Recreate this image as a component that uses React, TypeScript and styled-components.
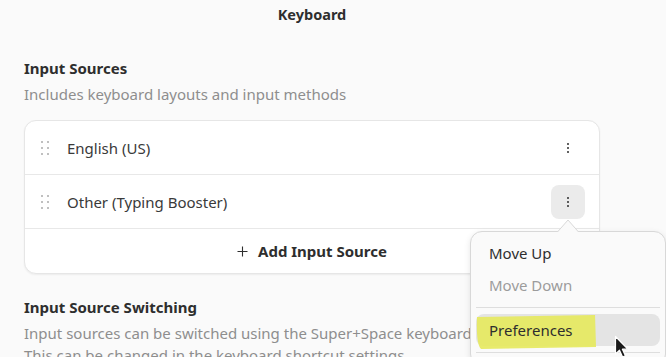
import React from "react";
import styled, { createGlobalStyle } from "styled-components";

const GlobalStyle = createGlobalStyle`
  html, body {
    margin: 0;
    padding: 0;
    background: #fafafa;
    overflow: hidden;
  }
  body {
    font-family: "Noto Sans", "Open Sans", sans-serif;
    color: #2e2e2e;
  }
`;

const Page = styled.div`
  position: relative;
  width: 666px;
  height: 357px;
  overflow: hidden;
  background: #fafafa;
`;

const Window = styled.div`
  width: 624px;
  display: flex;
  flex-direction: column;
`;

const HeaderBar = styled.header`
  height: 27px;
  display: flex;
  align-items: center;
  justify-content: center;
`;

const Title = styled.h1`
  margin: 0;
  font-size: 14.5px;
  font-weight: 700;
  color: #2e2e2e;
`;

const Content = styled.main`
  display: flex;
  flex-direction: column;
  padding: 30px 24px 0;
`;

const Section = styled.section<{ $gap?: number }>`
  display: flex;
  flex-direction: column;
  margin-top: ${(p) => p.$gap ?? 0}px;
`;

const SectionTitle = styled.h2`
  margin: 0;
  font-size: 15px;
  line-height: 22px;
  font-weight: 700;
  color: #2e2e2e;
`;

const SectionDesc = styled.p`
  margin: 4px 0 0;
  font-size: 15px;
  line-height: 22px;
  color: #8e8e8e;
`;

const Card = styled.div`
  margin-top: 15px;
  background: #ffffff;
  border: 1px solid #e6e6e6;
  border-radius: 12px;
  box-shadow: 0 1px 2px rgba(0, 0, 0, 0.06);
  display: flex;
  flex-direction: column;
`;

const Row = styled.div`
  height: 54px;
  box-sizing: border-box;
  display: flex;
  align-items: center;
  padding: 0 14px 0 16px;
  border-bottom: 1px solid #e8e8e8;
`;

const Handle = styled.span`
  display: grid;
  grid-template-columns: repeat(2, 2px);
  grid-auto-rows: 2px;
  column-gap: 4px;
  row-gap: 4px;
  width: 10px;
  margin-right: 16px;

  & > i {
    background: #ababab;
    border-radius: 1px;
  }
`;

const RowLabel = styled.span`
  flex: 1;
  font-size: 15px;
  color: #3a3a3a;
`;

const MenuAnchor = styled.div`
  position: relative;
`;

const MenuButton = styled.button<{ $active?: boolean }>`
  width: 34px;
  height: 34px;
  border: none;
  border-radius: 8px;
  padding: 0;
  display: flex;
  flex-direction: column;
  align-items: center;
  justify-content: center;
  gap: 2px;
  background: ${(p) => (p.$active ? "#ebebeb" : "transparent")};

  & > i {
    width: 2px;
    height: 2px;
    background: #2e2e2e;
    border-radius: 1px;
  }
`;

const AddRow = styled.div`
  height: 44px;
  display: flex;
  align-items: center;
  justify-content: center;
  gap: 10px;
  font-size: 15px;
  font-weight: 700;
  color: #2e2e2e;
`;

const Popover = styled.div`
  position: absolute;
  top: 46px;
  left: -81px;
  width: 196px;
  box-sizing: border-box;
  padding: 5px 5px 6px;
  background: #fafafa;
  border: 1px solid #d8d8d8;
  border-radius: 12px;
  box-shadow: 0 2px 6px rgba(0, 0, 0, 0.1);
  z-index: 5;
`;

const PopArrow = styled.svg`
  position: absolute;
  top: -13px;
  left: 86px;
`;

const MenuItem = styled.div<{ $disabled?: boolean; $hover?: boolean }>`
  position: relative;
  height: 32px;
  display: flex;
  align-items: center;
  padding: 0 13px;
  border-radius: 8px;
  font-size: 15px;
  color: ${(p) => (p.$disabled ? "#9c9c9c" : "#2e2e2e")};
  background: ${(p) => (p.$hover ? "#e4e4e4" : "transparent")};

  & > span {
    position: relative;
  }
`;

const MenuSep = styled.div`
  height: 1px;
  background: #dedede;
  margin: 6px 0;
`;

const Highlight = styled.svg`
  position: absolute;
  left: -1px;
  top: 0;
`;

const Cursor = styled.svg`
  position: absolute;
  left: 614px;
  top: 335px;
  z-index: 10;
`;

const dots = (n: number) => Array.from({ length: n }, (_, i) => <i key={i} />);

const Kebab = ({ active }: { active?: boolean }) => (
  <MenuButton $active={active}>{dots(3)}</MenuButton>
);

const Plus = () => (
  <svg width="11" height="11" viewBox="0 0 11 11">
    <path d="M5.5 0.5v10M0.5 5.5h10" stroke="#2e2e2e" strokeWidth="1.1" />
  </svg>
);

export default function App() {
  return (
    <Page>
      <GlobalStyle />
      <Window>
        <HeaderBar>
          <Title>Keyboard</Title>
        </HeaderBar>
        <Content>
          <Section>
            <SectionTitle>Input Sources</SectionTitle>
            <SectionDesc>Includes keyboard layouts and input methods</SectionDesc>
            <Card>
              <Row>
                <Handle>{dots(6)}</Handle>
                <RowLabel>English (US)</RowLabel>
                <Kebab />
              </Row>
              <Row>
                <Handle>{dots(6)}</Handle>
                <RowLabel>Other (Typing Booster)</RowLabel>
                <MenuAnchor>
                  <Kebab active />
                  <Popover>
                    <PopArrow width="22" height="14" viewBox="0 0 22 14">
                      <path d="M0 13.5 L11 1 L22 13.5" fill="#fafafa" stroke="#d8d8d8" strokeWidth="1" />
                      <rect x="0" y="13" width="22" height="2" fill="#fafafa" />
                    </PopArrow>
                    <MenuItem>Move Up</MenuItem>
                    <MenuItem $disabled>Move Down</MenuItem>
                    <MenuSep />
                    <MenuItem $hover>
                      <Highlight width="124" height="35" viewBox="0 0 124 35">
                        <path d="M2 3 L120 1 L121 33 L6 35 Q1 30 2 3 Z" fill="#e6e95c" opacity="0.9" />
                      </Highlight>
                      <span>Preferences</span>
                    </MenuItem>
                    <MenuSep />
                  </Popover>
                </MenuAnchor>
              </Row>
              <AddRow>
                <Plus />
                Add Input Source
              </AddRow>
            </Card>
          </Section>
          <Section $gap={22}>
            <SectionTitle>Input Source Switching</SectionTitle>
            <SectionDesc>
              Input sources can be switched using the Super+Space keyboard shortcut.
              <br />
              This can be changed in the keyboard shortcut settings.
            </SectionDesc>
          </Section>
        </Content>
      </Window>
      <Cursor width="16" height="24" viewBox="0 0 16 24">
        <path d="M1.5 1.5 L1.5 19 L5.5 15.2 L8.6 22 L11.4 20.8 L8.4 14.2 L13.8 14.2 Z" fill="#1a1a1a" stroke="#ffffff" strokeWidth="1.2" strokeLinejoin="round" />
      </Cursor>
    </Page>
  );
}
